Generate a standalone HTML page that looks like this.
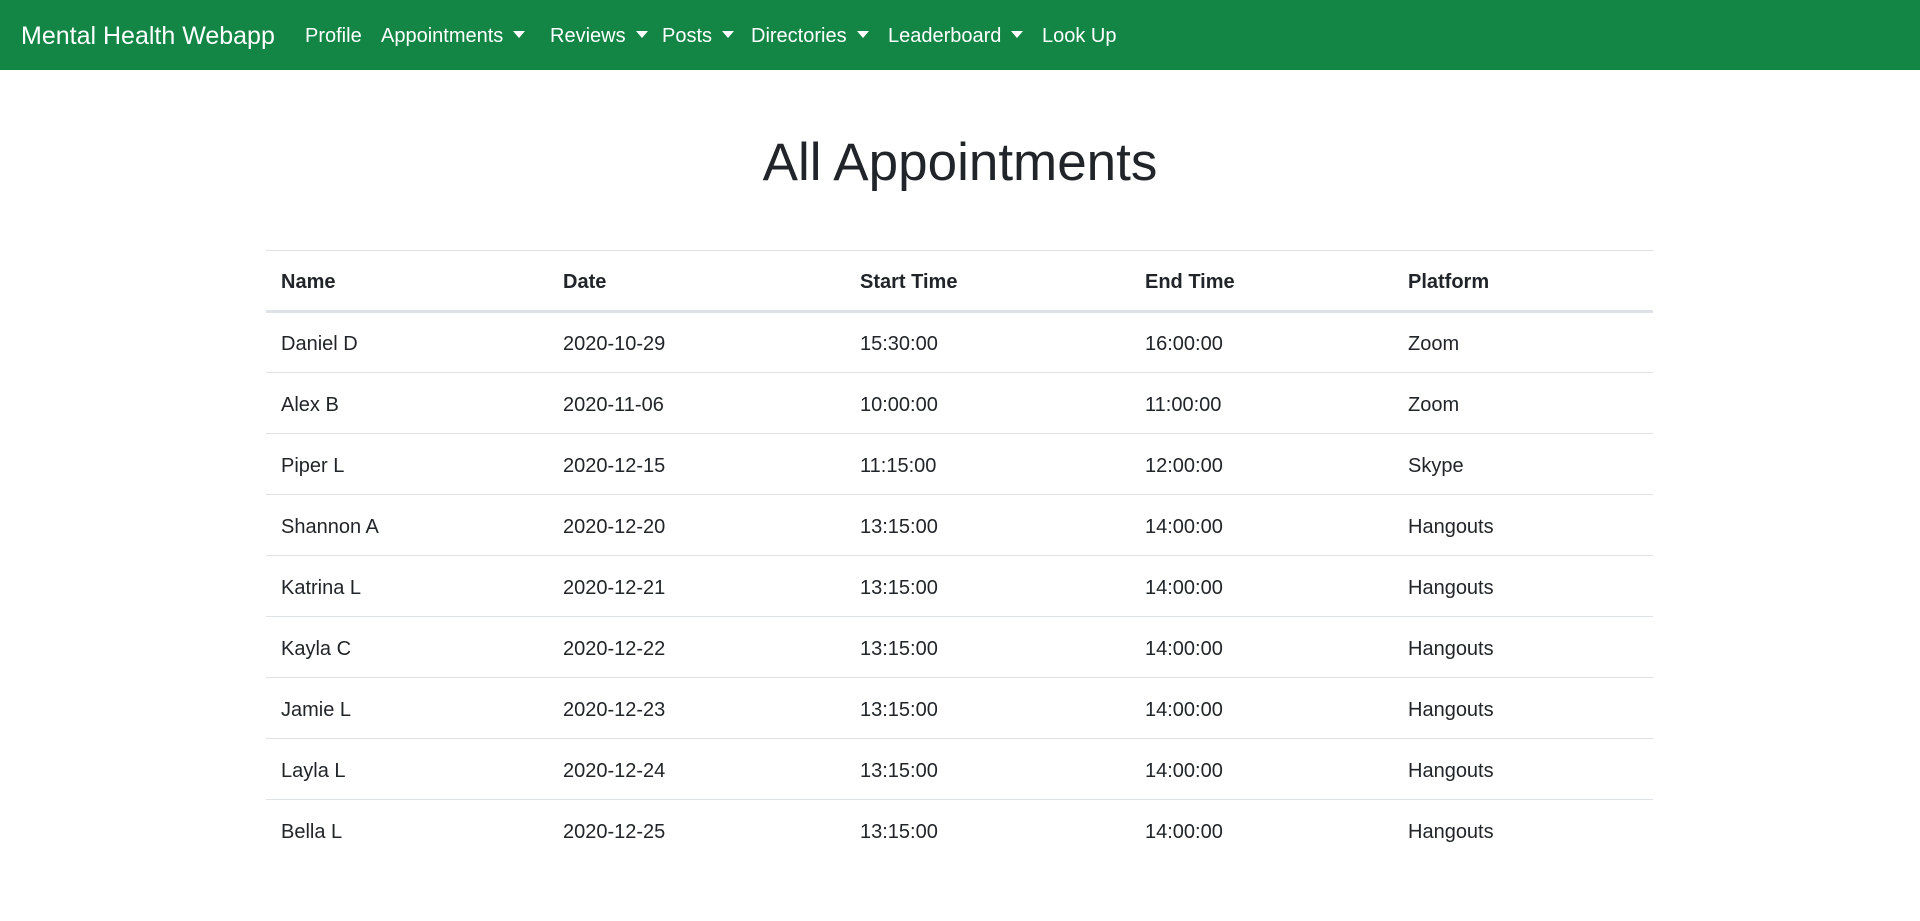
<!DOCTYPE html>
<html><head><meta charset="utf-8">
<style>
*{margin:0;padding:0;box-sizing:border-box}
body{width:1920px;height:921px;overflow:hidden;background:#fff;font-family:"Liberation Sans",sans-serif;color:#212529}
.nav{position:absolute;left:0;top:0;width:1920px;height:70px;background:#138645}
.nav span{position:absolute;color:#fff;line-height:70px;top:1px;font-size:20px;white-space:nowrap}
.nav .brand{font-size:25px;left:21px}
.caret{display:inline-block;width:0;height:0;border-left:6px solid transparent;border-right:6px solid transparent;border-top:7px solid #fff;margin-left:10px;vertical-align:4px}
h1{position:absolute;top:128px;left:0;width:1920px;text-align:center;font-size:53px;font-weight:normal;line-height:70px}
table{position:absolute;left:266px;top:250px;width:1387px;border-collapse:collapse;font-size:20px}
td,th{padding:4px 15px 0;height:61px;text-align:left;border-top:1px solid #dee2e6;vertical-align:middle}
th{font-weight:bold;border-bottom:3px solid #dee2e6;height:61px}
</style></head><body>
<div class="nav">
<span class="brand">Mental Health Webapp</span>
<span style="left:305px">Profile</span>
<span style="left:381px">Appointments<i class="caret"></i></span>
<span style="left:550px">Reviews<i class="caret"></i></span>
<span style="left:662px">Posts<i class="caret"></i></span>
<span style="left:751px">Directories<i class="caret"></i></span>
<span style="left:888px">Leaderboard<i class="caret"></i></span>
<span style="left:1042px">Look Up</span>
</div>
<h1>All Appointments</h1>
<table>
<colgroup><col style="width:282px"><col style="width:297px"><col style="width:285px"><col style="width:263px"><col></colgroup>
<tr><th>Name</th><th>Date</th><th>Start Time</th><th>End Time</th><th>Platform</th></tr>
<tr><td>Daniel D</td><td>2020-10-29</td><td>15:30:00</td><td>16:00:00</td><td>Zoom</td></tr>
<tr><td>Alex B</td><td>2020-11-06</td><td>10:00:00</td><td>11:00:00</td><td>Zoom</td></tr>
<tr><td>Piper L</td><td>2020-12-15</td><td>11:15:00</td><td>12:00:00</td><td>Skype</td></tr>
<tr><td>Shannon A</td><td>2020-12-20</td><td>13:15:00</td><td>14:00:00</td><td>Hangouts</td></tr>
<tr><td>Katrina L</td><td>2020-12-21</td><td>13:15:00</td><td>14:00:00</td><td>Hangouts</td></tr>
<tr><td>Kayla C</td><td>2020-12-22</td><td>13:15:00</td><td>14:00:00</td><td>Hangouts</td></tr>
<tr><td>Jamie L</td><td>2020-12-23</td><td>13:15:00</td><td>14:00:00</td><td>Hangouts</td></tr>
<tr><td>Layla L</td><td>2020-12-24</td><td>13:15:00</td><td>14:00:00</td><td>Hangouts</td></tr>
<tr><td>Bella L</td><td>2020-12-25</td><td>13:15:00</td><td>14:00:00</td><td>Hangouts</td></tr>
</table>
</body></html>
